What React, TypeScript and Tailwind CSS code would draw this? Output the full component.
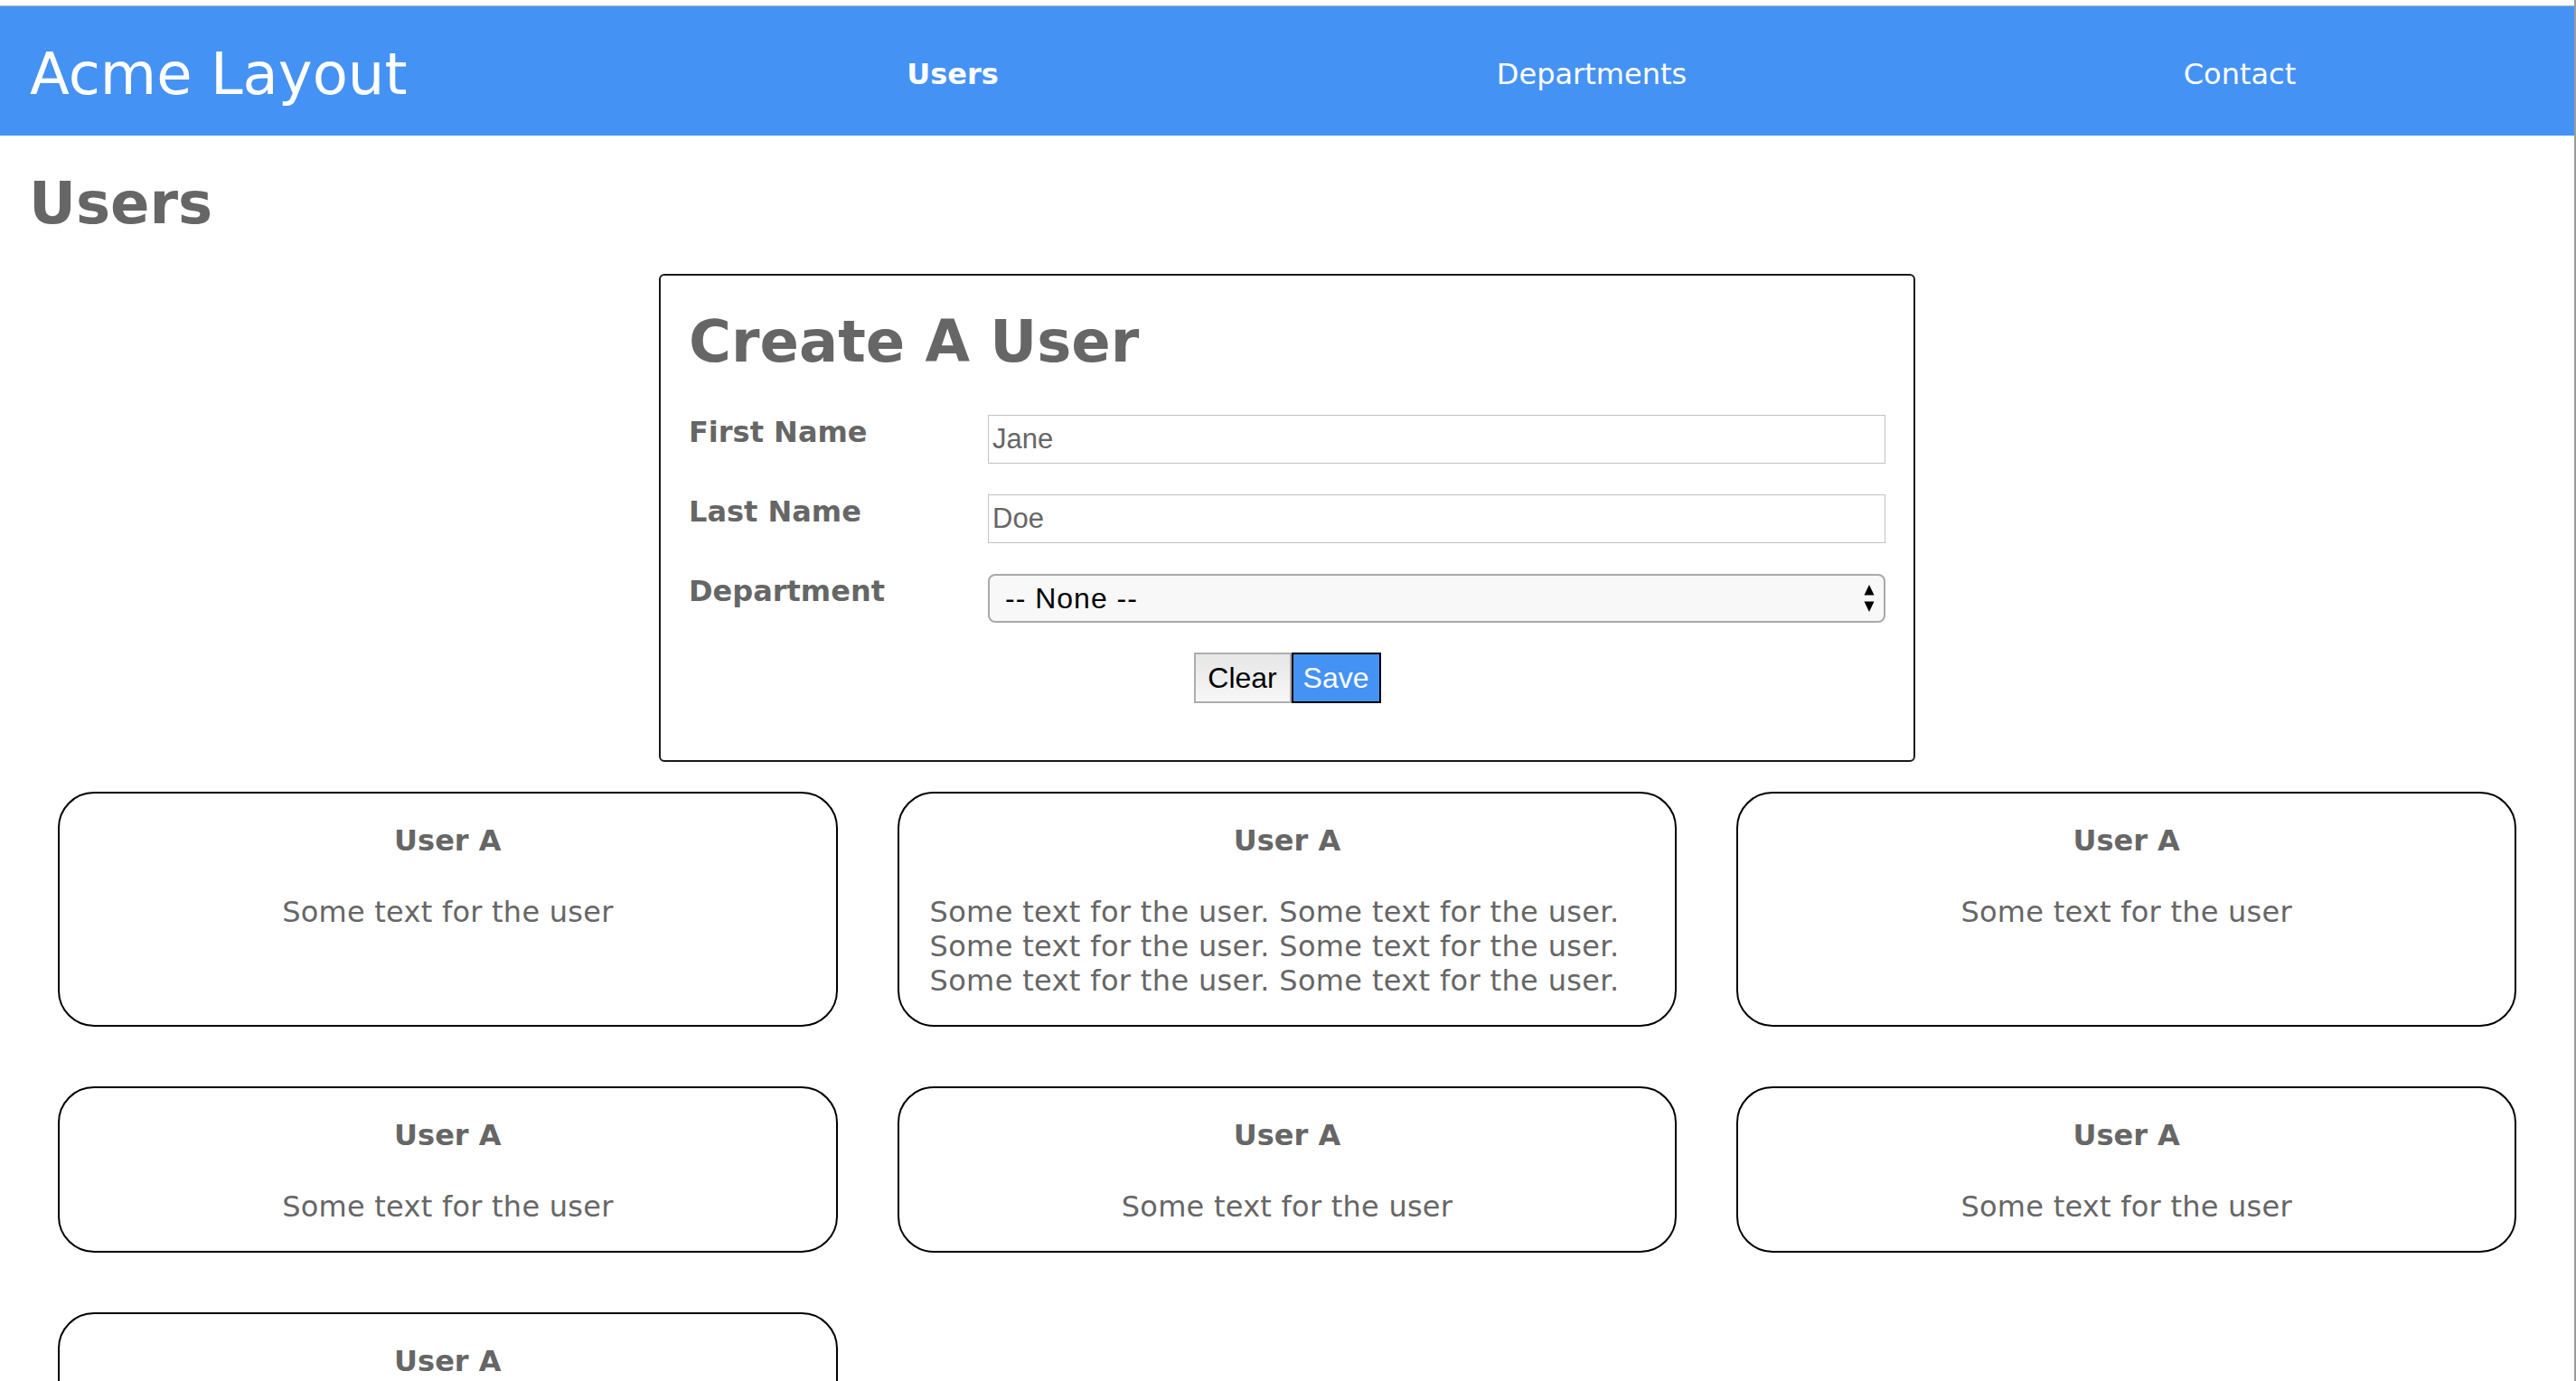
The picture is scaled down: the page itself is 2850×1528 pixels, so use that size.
import React from "react";

type Card = { title: string; text: string; shift?: boolean };

const cards: Card[] = [
  { title: "User A", text: "Some text for the user" },
  {
    title: "User A",
    text: "Some text for the user. Some text for the user. Some text for the user. Some text for the user. Some text for the user. Some text for the user.",
    shift: true,
  },
  { title: "User A", text: "Some text for the user" },
  { title: "User A", text: "Some text for the user" },
  { title: "User A", text: "Some text for the user" },
  { title: "User A", text: "Some text for the user" },
  { title: "User A", text: "Some text for the user" },
];

function UserCard({ card }: { card: Card }) {
  return (
    <div className="border-2 border-black rounded-[40px] pt-[34px] pb-[30px] text-center text-[#666]">
      <div className="text-[32px] font-bold leading-[37px]">{card.title}</div>
      <p
        className={
          card.shift
            ? "mt-[41px] text-[32px] leading-[38px] tracking-[0.35px] pl-[30px] pr-[58px]"
            : "mt-[41px] text-[32px] leading-[38px] tracking-[0.25px] px-[33px]"
        }
      >
        {card.text}
      </p>
    </div>
  );
}

function Row({ label, children }: { label: string; children: React.ReactNode }) {
  return (
    <div className="flex items-start">
      <div className="w-1/4 pt-[1px] text-[32px] font-bold leading-[37px] text-[#666]">{label}</div>
      <div className="w-3/4">{children}</div>
    </div>
  );
}

export default function App() {
  return (
    <div className="w-[2850px] min-h-[1528px] bg-white border-r-2 border-[#9c9c9c] font-['DejaVu_Sans',Verdana,sans-serif] overflow-hidden">
      <div className="h-[7px] border-b border-[#b5b5b5]" />
      <header className="h-[143px] bg-[#4592f5] flex items-center pt-[7px] text-white">
        <div className="w-[854px] pl-[33px] text-[64px] leading-none">Acme Layout</div>
        <div className="w-[400px] text-center text-[32px] font-bold leading-none">Users</div>
        <div className="ml-[307px] w-[400px] text-center text-[32px] leading-none">Departments</div>
        <div className="ml-[317px] w-[400px] text-center text-[32px] leading-none">Contact</div>
      </header>

      <h1 className="mt-[38px] pl-[32px] text-[64px] font-bold leading-[74px] text-[#666]">Users</h1>

      <div className="mt-[41px] mx-auto w-[1390px] border-2 border-[#1a1a1a] rounded-[6px] px-[31px] pt-[36px] pb-[63px]">
        <h2 className="text-[64px] font-bold leading-[74px] text-[#666]">Create A User</h2>
        <div className="mt-[44px] flex flex-col gap-[34px]">
          <Row label="First Name">
            <input
              readOnly
              value="Jane"
              className="w-full h-[54px] border border-[#c2c2c2] px-[4px] text-[31px] text-[#666] outline-none font-['Liberation_Sans',Arial,sans-serif]"
            />
          </Row>
          <Row label="Last Name">
            <input
              readOnly
              value="Doe"
              className="w-full h-[54px] border border-[#c2c2c2] px-[4px] text-[31px] text-[#666] outline-none font-['Liberation_Sans',Arial,sans-serif]"
            />
          </Row>
          <Row label="Department">
            <div className="relative w-full">
              <select className="appearance-none w-full h-[54px] rounded-[8px] border-2 border-[#a9a9a9] bg-[#f8f8f8] pl-[17px] text-[32px] tracking-[1px] text-black outline-none font-['Liberation_Sans',Arial,sans-serif]">
                <option>-- None --</option>
              </select>
              <svg
                className="absolute right-[12px] top-[11px] pointer-events-none"
                width="12"
                height="32"
                viewBox="0 0 12 32"
              >
                <polygon points="6,1 11.5,12.5 0.5,12.5" fill="#000" />
                <polygon points="0.5,19.5 11.5,19.5 6,31" fill="#000" />
              </svg>
            </div>
          </Row>
        </div>
        <div className="mt-[33px] flex justify-center">
          <button className="w-[108px] h-[56px] border-2 border-[#adadad] bg-linear-to-b from-[#e6e6e6] to-[#f7f7f7] text-[32px] text-black font-['Liberation_Sans',Arial,sans-serif]">
            Clear
          </button>
          <button className="w-[99px] h-[56px] border-2 border-black bg-[#4592f5] text-[32px] text-white font-['Liberation_Sans',Arial,sans-serif]">
            Save
          </button>
        </div>
      </div>

      <div className="mt-[33px] px-[64px] grid grid-cols-3 gap-[66px] items-stretch">
        {cards.map((c, i) => (
          <UserCard key={i} card={c} />
        ))}
      </div>
    </div>
  );
}
